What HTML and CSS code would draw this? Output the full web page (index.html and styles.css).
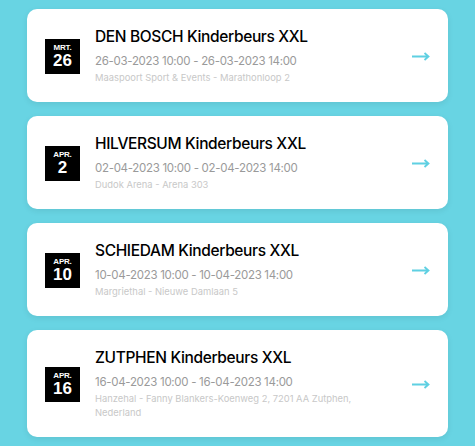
FILE: index.html
```html
<!DOCTYPE html>
<html lang="nl">
<head>
    <meta charset="UTF-8" />
    <meta name="viewport" content="width=device-width, initial-scale=1.0">
    <title>Kinderbeurs XXL agenda</title>
    <link rel="stylesheet" href="styles.css">
</head>
<body>

<div class="event-list">
    <a class="event-card" href="#">
        <div class="date-box">
            <span class="month">MRT.</span>
            <span class="day">26</span>
        </div>
        <div class="event-info">
            <h3>DEN BOSCH Kinderbeurs XXL</h3>
            <p class="event-time">26-03-2023 10:00 - 26-03-2023 14:00</p>
            <p class="event-place">Maaspoort Sport &amp; Events - Marathonloop 2</p>
        </div>
        <svg class="arrow" width="18" height="9" viewBox="0 0 18 9"><path d="M0 4.5h16M12.5 1l4 3.5-4 3.5" fill="none" stroke="currentColor" stroke-width="1.8"/></svg>
    </a>

    <a class="event-card" href="#">
        <div class="date-box">
            <span class="month">APR.</span>
            <span class="day">2</span>
        </div>
        <div class="event-info">
            <h3>HILVERSUM Kinderbeurs XXL</h3>
            <p class="event-time">02-04-2023 10:00 - 02-04-2023 14:00</p>
            <p class="event-place">Dudok Arena - Arena 303</p>
        </div>
        <svg class="arrow" width="18" height="9" viewBox="0 0 18 9"><path d="M0 4.5h16M12.5 1l4 3.5-4 3.5" fill="none" stroke="currentColor" stroke-width="1.8"/></svg>
    </a>

    <a class="event-card" href="#">
        <div class="date-box">
            <span class="month">APR.</span>
            <span class="day">10</span>
        </div>
        <div class="event-info">
            <h3>SCHIEDAM Kinderbeurs XXL</h3>
            <p class="event-time">10-04-2023 10:00 - 10-04-2023 14:00</p>
            <p class="event-place">Margriethal - Nieuwe Damlaan 5</p>
        </div>
        <svg class="arrow" width="18" height="9" viewBox="0 0 18 9"><path d="M0 4.5h16M12.5 1l4 3.5-4 3.5" fill="none" stroke="currentColor" stroke-width="1.8"/></svg>
    </a>

    <a class="event-card" href="#">
        <div class="date-box">
            <span class="month">APR.</span>
            <span class="day">16</span>
        </div>
        <div class="event-info">
            <h3>ZUTPHEN Kinderbeurs XXL</h3>
            <p class="event-time">16-04-2023 10:00 - 16-04-2023 14:00</p>
            <p class="event-place">Hanzehal - Fanny Blankers-Koenweg 2, 7201 AA Zutphen, Nederland</p>
        </div>
        <svg class="arrow" width="18" height="9" viewBox="0 0 18 9"><path d="M0 4.5h16M12.5 1l4 3.5-4 3.5" fill="none" stroke="currentColor" stroke-width="1.8"/></svg>
    </a>
</div>

</body>
</html>
```

FILE: styles.css
```css
body {
    margin: 0;
    font-family: Inter, "Liberation Sans", Arial, sans-serif;
    background-color: #68d4e3;
}

.event-list {
    display: flex;
    flex-direction: column;
    gap: 14.5px;
    padding: 9px 27px;
}

.event-card {
    display: flex;
    align-items: center;
    background-color: #fff;
    border-radius: 10px;
    box-shadow: 0 2px 6px rgba(0, 0, 0, 0.08);
    padding: 18px 18px 16.5px 18px;
    text-decoration: none;
    color: #000;
}

.date-box {
    flex: none;
    width: 35px;
    height: 35px;
    background-color: #000;
    color: #fff;
    display: flex;
    flex-direction: column;
    align-items: center;
    justify-content: center;
    font-family: "Liberation Sans", Arial, sans-serif;
    font-weight: bold;
}

.date-box .month {
    font-size: 8px;
    line-height: 8px;
    letter-spacing: -0.2px;
}

.date-box .day {
    font-size: 17px;
    line-height: 17px;
}

.event-info {
    flex: 1;
    margin-left: 15px;
    margin-right: 20px;
}

.event-info h3 {
    margin: 0 0 7px 0;
    font-size: 15.5px;
    line-height: 20px;
    font-weight: 500;
    letter-spacing: -0.35px;
}

.event-info p {
    margin: 0;
}

.event-time {
    font-size: 11.5px;
    line-height: 15px;
    color: #9a9a9a;
    letter-spacing: -0.3px;
}

.event-place {
    font-size: 9.4px;
    line-height: 14px;
    color: #c8c8c8;
    margin-top: 2px !important;
}

.arrow {
    flex: none;
    color: #5fd0e2;
}
```
